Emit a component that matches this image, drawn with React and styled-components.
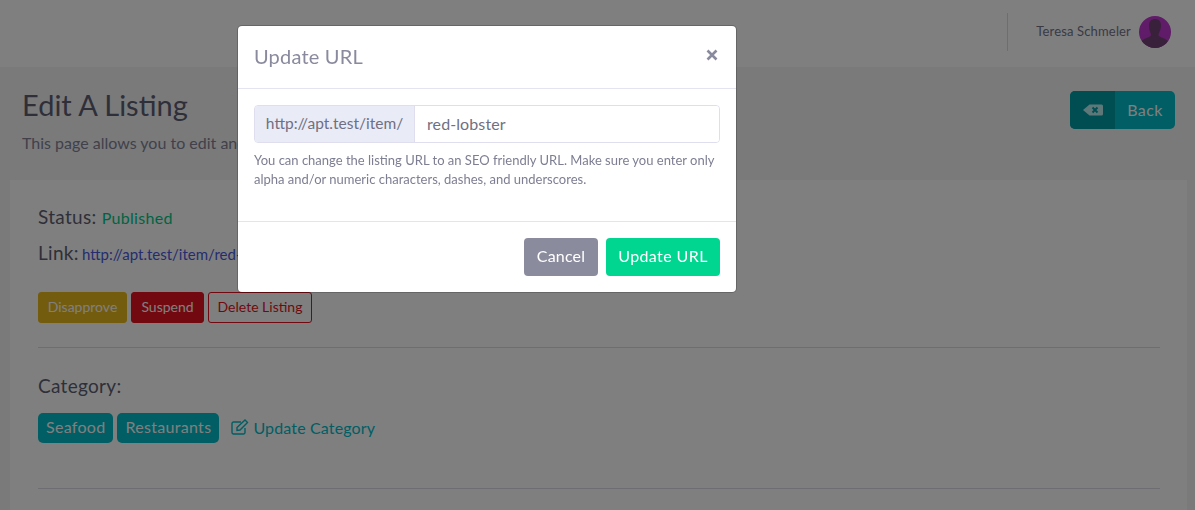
import styled, { createGlobalStyle } from "styled-components"

const GlobalStyle = createGlobalStyle`
  html, body {
    margin: 0;
    height: 100%;
    overflow: hidden;
    background: #f4f5f7;
  }
  body {
    font-family: "Lato", "Noto Sans", sans-serif;
    color: #5e5f72;
  }
  * {
    box-sizing: border-box;
  }
`

const Page = styled.div`
  height: 510px;
  overflow: hidden;
`

const Header = styled.header`
  height: 67px;
  background: #fff;
  display: flex;
  justify-content: flex-end;
  align-items: center;
  padding-right: 24px;
`

const UserBox = styled.div`
  height: 38px;
  margin-top: -3px;
  padding-left: 28px;
  border-left: 1px solid #dcdce4;
  display: flex;
  align-items: center;
  gap: 8px;
  font-size: 13px;
  letter-spacing: 0.15px;
`

const UserName = styled.span`
  padding-bottom: 2px;
  color: #74758a;
`

const Avatar = styled.svg`
  width: 32px;
  height: 32px;
  display: block;
`

const Main = styled.main`
  padding: 22px 20px 0 10px;
`

const TitleRow = styled.div`
  display: flex;
  justify-content: space-between;
  align-items: flex-start;
  padding-left: 12px;
`

const Title = styled.h1`
  margin: 0;
  font-size: 29px;
  line-height: 32px;
  font-weight: 400;
  color: #5e5f72;
`

const Lead = styled.p`
  margin: 12px 0 0;
  font-size: 16px;
  line-height: 20px;
  color: #828396;
`

const BackButton = styled.button`
  height: 38px;
  width: 105px;
  margin-top: 2px;
  padding: 0;
  border: 0;
  border-radius: 5px;
  overflow: hidden;
  display: flex;
  background: #00bcc8;
  color: #fff;
  font: inherit;
  font-size: 16px;
  letter-spacing: 0.4px;
  align-items: stretch;
`

const BackIcon = styled.span`
  width: 45px;
  background: #009ca4;
  display: flex;
  align-items: center;
  justify-content: center;
`

const BackLabel = styled.span`
  flex: 1;
  display: flex;
  align-items: center;
  justify-content: center;
  padding-bottom: 2px;
`

const Card = styled.section`
  margin-top: 27px;
  background: #fff;
  padding: 25px 27px 0 28px;
  height: 330px;
  width: 1177px;
`

const InfoLine = styled.div`
  font-size: 19px;
  line-height: 24px;
  letter-spacing: 0.3px;
  margin-bottom: 11px;
`

const Status = styled.span`
  color: #00c985;
  font-size: 16px;
`

const LinkText = styled.a`
  margin-left: -2px;
  color: #4a5ae0;
  font-size: 15px;
  letter-spacing: 0;
`

const ButtonRow = styled.div`
  display: flex;
  gap: 4px;
  margin-top: 26px;
`

const SmallButton = styled.button`
  height: 31px;
  width: ${props => props.$width}px;
  padding: 0 0 2px;
  border-radius: 3px;
  font: inherit;
  font-size: 14px;
  background: ${props => props.$bg};
  color: ${props => props.$color};
  border: 1px solid ${props => props.$border};
`

const Divider = styled.hr`
  margin: 24px 0 0;
  border: 0;
  border-top: 1px solid #dcdce4;
`

const CategoryLabel = styled.div`
  margin-top: 26px;
  font-size: 19px;
  line-height: 24px;
  letter-spacing: 0.3px;
`

const BadgeRow = styled.div`
  display: flex;
  align-items: center;
  gap: 4px;
  margin-top: 15px;
  margin-bottom: 45px;
`

const Badge = styled.span`
  height: 30px;
  padding: 0 8px 3px;
  border-radius: 5px;
  background: #00bcc8;
  color: #fff;
  font-size: 16px;
  letter-spacing: 0.3px;
  display: flex;
  align-items: center;
`

const UpdateLink = styled.a`
  margin-left: 8px;
  padding-bottom: 2px;
  color: #00bcc8;
  font-size: 16px;
  letter-spacing: 0.15px;
  display: flex;
  align-items: center;
  gap: 4px;
`

const Backdrop = styled.div`
  position: fixed;
  inset: 0;
  background: rgba(0, 0, 0, 0.5);
`

const Modal = styled.div`
  position: fixed;
  top: 26px;
  left: 238px;
  width: 498px;
  height: 266px;
  background: #fff;
  border-radius: 4px;
  box-shadow: 0 0 0 1px rgba(0, 0, 0, 0.2);
  display: flex;
  flex-direction: column;
`

const ModalHeader = styled.div`
  height: 63px;
  padding: 0 16px 2px;
  border-bottom: 1px solid #e4e4f0;
  display: flex;
  align-items: center;
  justify-content: space-between;
`

const ModalTitle = styled.h5`
  margin: 0;
  font-size: 20px;
  font-weight: 400;
  letter-spacing: 0.2px;
  color: #8a8a9e;
`

const Close = styled.svg`
  width: 12px;
  height: 12px;
  display: block;
  margin-right: 2px;
  margin-top: -3px;
`

const ModalBody = styled.div`
  flex: 1;
  padding: 16px 16px 0;
`

const InputGroup = styled.div`
  display: flex;
  height: 38px;
  border: 1px solid #dedeee;
  border-radius: 4px;
  overflow: hidden;
`

const Prefix = styled.span`
  width: 160px;
  padding-bottom: 2px;
  background: #e9ebf7;
  border-right: 1px solid #dedeee;
  color: #6f7083;
  font-size: 15.5px;
  display: flex;
  align-items: center;
  justify-content: center;
`

const Input = styled.input`
  flex: 1;
  min-width: 0;
  border: 0;
  outline: 0;
  padding: 0 12px 2px;
  font: inherit;
  font-size: 16px;
  letter-spacing: 0.1px;
  color: #6f7083;
`

const Help = styled.p`
  margin: 8px 0 0;
  font-size: 13px;
  line-height: 19px;
  color: #7d7e92;
`

const ModalFooter = styled.div`
  height: 71px;
  padding: 0 16px;
  border-top: 1px solid #e4e4f0;
  display: flex;
  align-items: center;
  justify-content: flex-end;
  gap: 8px;
`

const FooterButton = styled.button`
  height: 38px;
  width: ${props => props.$width}px;
  padding: 0 0 3px;
  border: 0;
  border-radius: 4px;
  font: inherit;
  font-size: 16px;
  letter-spacing: ${props => props.$spacing}px;
  color: #fff;
  background: ${props => props.$bg};
`

const App = () => (
  <Page>
    <GlobalStyle />
    <Header>
      <UserBox>
        <UserName>Teresa Schmeler</UserName>
        <Avatar viewBox="0 0 32 32">
          <clipPath id="avatar-clip"><circle cx="16" cy="16" r="16" /></clipPath>
          <g clipPath="url(#avatar-clip)">
            <rect width="32" height="32" fill="#c038d0" />
            <path d="M10 9c0-4 3-6 6-6s6 2 6 6c0 3-.6 5-1.600 7-.5 1-.9 2-.9 3 0 2 6 3 9 5.500V32H3v-7.500C6 22 12 21 12 19c0-1-.4-2-.9-3-1-2-1.100-4-1.100-7z" fill="#744276" />
          </g>
        </Avatar>
      </UserBox>
    </Header>
    <Main>
      <TitleRow>
        <div>
          <Title>Edit A Listing</Title>
          <Lead>This page allows you to edit and update.</Lead>
        </div>
        <BackButton>
          <BackIcon>
            <svg width="20" height="12" viewBox="0 0 20 12">
              <path fill="#bdf0f4" d="M6.500 .5H18.500a1.500 1.500 0 0 1 1.500 1.500v8a1.500 1.500 0 0 1-1.500 1.500H6.500L0 6z" />
              <path d="M9.500 3.500l5 5M14.500 3.500l-5 5" stroke="#009ca4" strokeWidth="2" fill="none" />
            </svg>
          </BackIcon>
          <BackLabel>Back</BackLabel>
        </BackButton>
      </TitleRow>
      <Card>
        <InfoLine>Status: <Status>Published</Status></InfoLine>
        <InfoLine>Link: <LinkText>http://apt.test/item/red-lobster</LinkText></InfoLine>
        <ButtonRow>
          <SmallButton $width={89} $bg="#e8b81e" $color="#fff" $border="#e8b81e">Disapprove</SmallButton>
          <SmallButton $width={73} $bg="#e41220" $color="#fff" $border="#e41220">Suspend</SmallButton>
          <SmallButton $width={104} $bg="#fff" $color="#e41220" $border="#e41220">Delete Listing</SmallButton>
        </ButtonRow>
        <Divider />
        <CategoryLabel>Category:</CategoryLabel>
        <BadgeRow>
          <Badge>Seafood</Badge>
          <Badge>Restaurants</Badge>
          <UpdateLink>
            <svg width="18" height="16" viewBox="0 0 18 16" fill="none" stroke="#00bcc8" strokeWidth="1.400">
              <path d="M14 9v4.500a1.500 1.500 0 0 1-1.500 1.500h-10A1.500 1.500 0 0 1 1 13.500v-9A1.500 1.500 0 0 1 2.500 3H10" />
              <path d="M6 8.500 14 1l2.500 2.500L9 11l-3 .5z" />
            </svg>
            Update Category
          </UpdateLink>
        </BadgeRow>
        <Divider />
      </Card>
    </Main>
    <Backdrop />
    <Modal>
      <ModalHeader>
        <ModalTitle>Update URL</ModalTitle>
        <Close viewBox="0 0 12 12">
          <path d="M1.500 1.500l9 9M10.500 1.500l-9 9" stroke="#8a8a9e" strokeWidth="2.600" />
        </Close>
      </ModalHeader>
      <ModalBody>
        <InputGroup>
          <Prefix>http://apt.test/item/</Prefix>
          <Input defaultValue="red-lobster" />
        </InputGroup>
        <Help>You can change the listing URL to an SEO friendly URL. Make sure you enter only alpha and/or numeric characters, dashes, and underscores.</Help>
      </ModalBody>
      <ModalFooter>
        <FooterButton $width={74} $spacing={0.2} $bg="#8b8b9e">Cancel</FooterButton>
        <FooterButton $width={114} $spacing={0.4} $bg="#00d68f">Update URL</FooterButton>
      </ModalFooter>
    </Modal>
  </Page>
)

export default App
